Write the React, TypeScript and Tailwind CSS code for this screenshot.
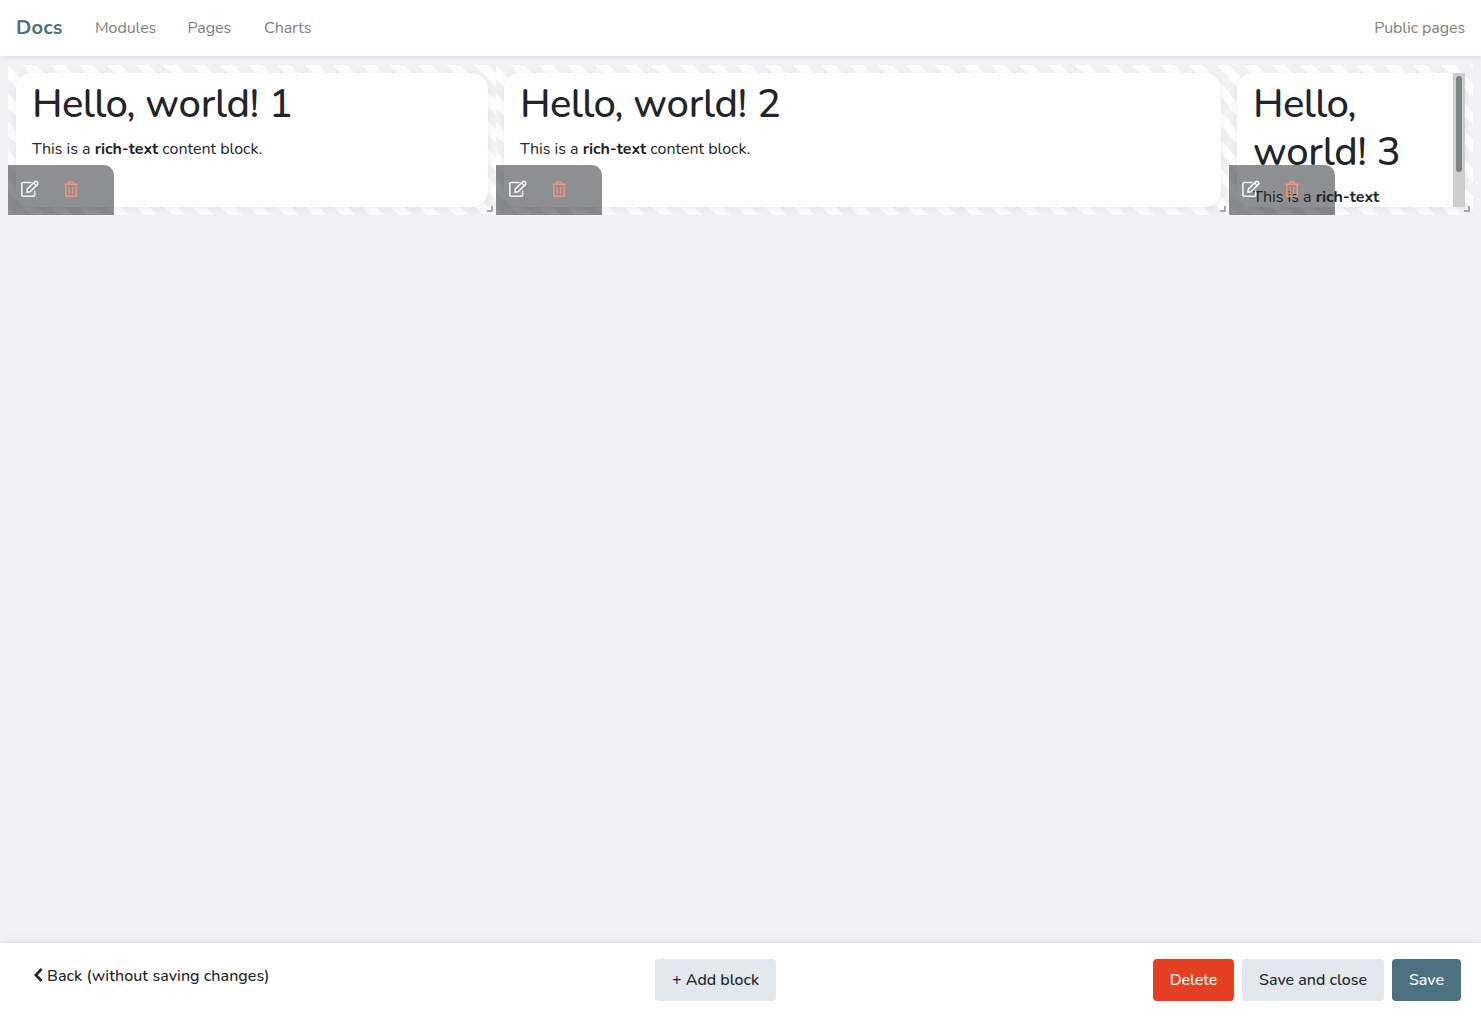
import React from "react";

const stripes =
  "bg-[linear-gradient(45deg,#f2f2f5_25%,#ffffff_25%,#ffffff_50%,#f2f2f5_50%,#f2f2f5_75%,#ffffff_75%,#ffffff)] bg-[length:28.28px_28.28px]";

function EditIcon() {
  return (
    <svg className="h-[18px] w-[18px] text-[#f6f6f7]" viewBox="0 0 18 18" fill="none" stroke="currentColor" strokeWidth="1.5" strokeLinejoin="round" strokeLinecap="round">
      <path d="M10 2.6H1.9Q.9 2.6 .9 3.6V15.2Q.9 16.2 1.9 16.2H12.6Q13.6 16.2 13.6 15.2V11.3" />
      <path d="M6.3 9.1L13.6 1.7Q14.7.7 15.7 1.6L16.5 2.4Q17.4 3.4 16.5 4.4L9.1 11.7L5.9 12.3Z" />
      <path d="M12.6 2.9L15.3 5.6" />
    </svg>
  );
}

function TrashIcon() {
  return (
    <svg className="h-4 w-[14px] text-[#f6937f]" viewBox="0 0 14 16" fill="none" stroke="currentColor" strokeWidth="1.5" strokeLinejoin="round" strokeLinecap="round">
      <path d="M.8 3.2H13.2M1.8 3.3V14.2Q1.8 15.2 2.8 15.2H11.2Q12.2 15.2 12.2 14.2V3.3" />
      <path d="M4.1 3L5 .9H9L9.9 3" />
      <path d="M5.3 6.2V12.4M8.7 6.2V12.4" strokeWidth="1.2" />
    </svg>
  );
}

function Block({ n, width, scroll }: { n: number; width: string; scroll?: boolean }) {
  return (
    <div className={`relative h-[150px] shrink-0 p-2 ${width} ${stripes}`}>
      <div className={`flex h-full overflow-hidden bg-white shadow-[0_2px_8px_rgba(60,60,90,0.09)] ${scroll ? "rounded-l-2xl" : "rounded-2xl"}`}>
        <div className="min-w-0 flex-1 px-4 pt-[7px]">
          <h1 className="mb-[9px] text-[40px] leading-[48px] font-[540] tracking-[-0.25px]">
            <span className="tracking-[-0.6px]">Hello,</span> world! {n}
          </h1>
          <p className="text-[16px] leading-6 tracking-[-0.02px]">
            This is a <b className="font-bold">rich-text</b> content block.
          </p>
        </div>
        {scroll && (
          <div className="w-3 shrink-0 bg-[#cdcdcd] px-[3px] pt-[3px]">
            <div className="h-24 rounded-full bg-[#7e8282]" />
          </div>
        )}
      </div>
      <div className="absolute bottom-0 left-0 flex h-[50px] w-[106px] items-center rounded-tr-[10px] bg-[rgba(30,32,34,0.5)] pb-[2px] pl-[13px]">
        <EditIcon />
        <span className="ml-[25px] flex">
          <TrashIcon />
        </span>
      </div>
      <div className="absolute right-[3px] bottom-[3px] h-[6px] w-[6px] border-r-2 border-b-2 border-[#a9a9ab]" />
    </div>
  );
}

export default function App() {
  return (
    <div className="flex h-[1017px] flex-col bg-[#f2f2f5] font-['Nunito',sans-serif] text-[#212529]">
      <nav className="relative flex h-14 shrink-0 items-center bg-white px-4 text-[16px] tracking-[-0.08px] text-[#808080] shadow-[0_2px_5px_rgba(60,60,90,0.1)]">
        <a className="w-[79px] text-[20px] font-bold tracking-[0.2px] text-[#4c7280]">Docs</a>
        <a className="w-[92.5px]">Modules</a>
        <a className="w-[76.5px] tracking-normal">Pages</a>
        <a>Charts</a>
        <a className="ml-auto">Public pages</a>
      </nav>
      <main className="flex flex-1 items-start px-2 pt-[9px]">
        <Block n={1} width="w-[488px]" />
        <Block n={2} width="w-[733px]" />
        <Block n={3} width="w-[244px]" scroll />
      </main>
      <footer className="flex h-[75px] shrink-0 items-start border-t border-[#dedee4] bg-white pt-4 pr-5 pl-[34px] text-[16px] font-medium shadow-[0_-2px_8px_rgba(60,60,90,0.07)]">
        <a className="flex w-[621px] items-center pt-[5px] leading-6 tracking-[0.06px]">
          <svg className="mr-1 h-[14px] w-[9px] -translate-y-px" viewBox="0 0 9 14" fill="none" stroke="currentColor" strokeWidth="2.6">
            <path d="M7.6 1L1.8 7L7.6 13" />
          </svg>
          Back (without saving changes)
        </a>
        <button className="h-[42px] w-[121px] rounded bg-[#e3e7ee]">+ Add block</button>
        <div className="ml-auto flex gap-2">
          <button className="h-[42px] w-[81px] rounded bg-[#e64024] tracking-[-0.08px] text-white">Delete</button>
          <button className="h-[42px] w-[142px] rounded bg-[#e3e7ee]">Save and close</button>
          <button className="h-[42px] w-[69px] rounded bg-[#4c7280] text-white">Save</button>
        </div>
      </footer>
    </div>
  );
}
